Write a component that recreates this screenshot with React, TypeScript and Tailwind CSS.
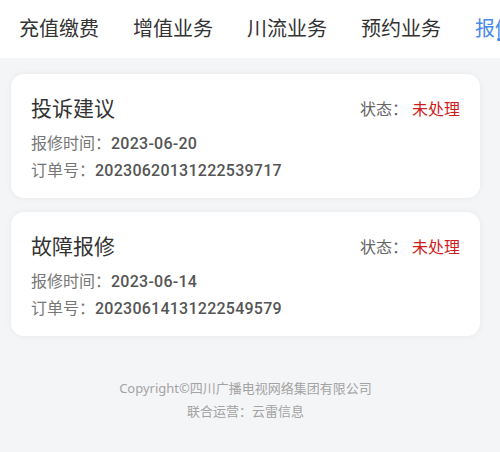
const font = { fontFamily: "'Noto Sans', 'Noto Sans CJK SC', sans-serif" };
const numFont = { fontFamily: "Roboto, 'Noto Sans CJK SC', sans-serif" };

const tabs = ["充值缴费", "增值业务", "川流业务", "预约业务", "报修业务"];

const orders = [
  { title: "投诉建议", date: "2023-06-20", no: "20230620131222539717" },
  { title: "故障报修", date: "2023-06-14", no: "20230614131222549579" },
];

function OrderCard({ title, date, no }: { title: string; date: string; no: string }) {
  return (
    <div className="rounded-[13px] bg-white px-5 pt-5 pb-[14px] shadow-[0_0_6px_rgba(0,0,0,0.06)]">
      <div className="flex h-7 items-center justify-between">
        <span className="text-[21px] leading-[28px] text-[#333]">{title}</span>
        <span className="relative top-[1px] flex gap-1 text-[16px] leading-[28px]">
          <span className="text-[#666]">状态：</span>
          <span className="text-[#cc1d1d]">未处理</span>
        </span>
      </div>
      <div className="mt-2 text-[16px] leading-[27px] text-[#777]">
        报修时间：<span className="font-medium tracking-[0.25px] text-[#555]" style={numFont}>{date}</span>
      </div>
      <div className="text-[16px] leading-[27px] text-[#777]">
        订单号：<span className="font-medium tracking-[0.25px] text-[#555]" style={numFont}>{no}</span>
      </div>
    </div>
  );
}

export default function App() {
  return (
    <div className="h-[452px] w-[500px] overflow-hidden bg-[#f4f5f7]" style={font}>
      <nav className="flex h-[58px] items-center gap-[34px] overflow-hidden whitespace-nowrap bg-white pl-[19px]">
        {tabs.map((t, i) => (
          <span key={t} className={`relative shrink-0 text-[20px] ${i === 4 ? "text-[#4a8ae8]" : "text-[#333]"}`}>
            {t}
            {i === 4 && <span className="absolute top-[24px] left-[22px] h-[3px] w-[36px] rounded bg-[#4a8ae8]" />}
          </span>
        ))}
      </nav>
      <main className="w-[491px] px-[11px] pt-4">
        <div className="flex flex-col gap-[14px]">
          {orders.map((o) => (
            <OrderCard key={o.no} {...o} />
          ))}
        </div>
        <footer className="mt-[41px] text-center text-[13px] leading-[23px] text-[#a3a3a3]">
          <div>Copyright©四川广播电视网络集团有限公司</div>
          <div>联合运营：云雷信息</div>
        </footer>
      </main>
    </div>
  );
}
